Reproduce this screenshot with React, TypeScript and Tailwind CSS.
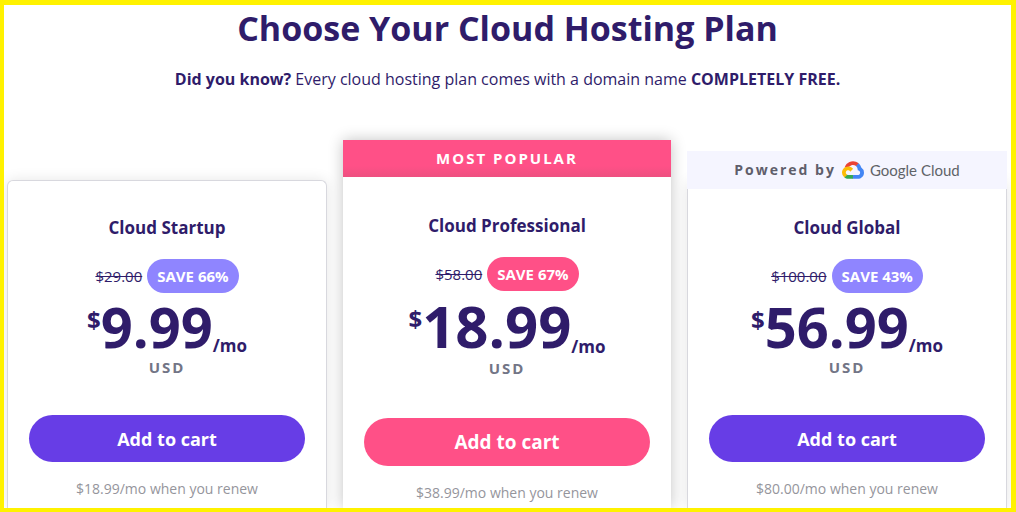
import React from 'react';
import clsx from 'clsx';

type Plan = {
  name: string;
  oldPrice: string;
  discount: string;
  price: string;
  renew: string;
  popular?: boolean;
  google?: boolean;
};

const plans: Plan[] = [
  {
    name: 'Cloud Startup',
    oldPrice: '$29.00',
    discount: 'SAVE 66%',
    price: '9.99',
    renew: '$18.99/mo when you renew',
  },
  {
    name: 'Cloud Professional',
    oldPrice: '$58.00',
    discount: 'SAVE 67%',
    price: '18.99',
    renew: '$38.99/mo when you renew',
    popular: true,
  },
  {
    name: 'Cloud Global',
    oldPrice: '$100.00',
    discount: 'SAVE 43%',
    price: '56.99',
    renew: '$80.00/mo when you renew',
    google: true,
  },
];

const GoogleCloudIcon = () => (
  <svg viewBox="0 0 256 206" className="h-[18px] w-[22px]" aria-hidden="true">
    <path
      fill="#EA4335"
      d="M170.25 56.82l22.25-22.25 1.48-9.37C153.44-11.67 88.98-7.49 52.42 33.93 42.27 45.44 34.73 59.8 30.72 74.58l7.96-1.12 44.51-7.34 3.44-3.51c19.8-21.75 53.27-24.67 76.13-6.17z"
    />
    <path
      fill="#4285F4"
      d="M224.2 73.92a100.25 100.25 0 0 0-30.22-48.72l-31.23 31.23a55.52 55.52 0 0 1 20.37 44.04v5.55c15.35 0 27.8 12.45 27.8 27.8 0 15.35-12.45 27.49-27.8 27.49h-55.67l-5.47 5.93v33.34l5.47 5.24h55.67c39.93.31 72.55-31.49 72.87-71.42a72.3 72.3 0 0 0-31.79-60.48"
    />
    <path
      fill="#34A853"
      d="M71.87 205.8h55.59v-44.51H71.87c-3.96 0-7.88-.85-11.48-2.49l-8.02 2.46-22.4 22.25-1.95 7.56c12.56 9.49 27.91 14.8 43.85 14.73"
    />
    <path
      fill="#FBBC05"
      d="M71.87 61.43C31.94 61.66-.24 94.23 0 134.16a72.3 72.3 0 0 0 28.02 56.94l32.24-32.25c-13.99-6.32-20.21-22.79-13.89-36.78 6.32-13.99 22.78-20.21 36.77-13.89a27.8 27.8 0 0 1 13.9 13.89l32.24-32.24a72.23 72.23 0 0 0-57.41-28.4"
    />
  </svg>
);

const Banner = ({ plan }: { plan: Plan }) => {
  if (plan.popular) {
    return (
      <div className="flex h-[37px] items-center justify-center bg-linear-to-b from-[#ff5087] from-70% to-[#ee5080] text-[15px] font-bold tracking-[2px] text-white">
        MOST POPULAR
      </div>
    );
  }
  if (plan.google) {
    return (
      <div className="relative z-10 -mb-1.5 flex h-[38px] items-center justify-center gap-1.5 bg-[#f5f5ff] text-[#5f5e6b]">
        <span className="text-sm font-bold tracking-[2px]">Powered by</span>
        <GoogleCloudIcon />
        <span className="font-['Lato',sans-serif] text-[15px] text-[#5f6368]">Google Cloud</span>
      </div>
    );
  }
  return null;
};

const PlanCard = ({ plan }: { plan: Plan }) => (
  <article
    className={clsx(
      'flex flex-col',
      plan.popular && 'z-20 shadow-[0_0_14px_rgba(0,0,0,0.24)]',
      plan.google && 'pt-[11px]',
      !plan.popular && !plan.google && 'pt-10'
    )}
  >
    <Banner plan={plan} />
    <div
      className={clsx(
        'flex grow flex-col items-center bg-white px-[21px]',
        plan.popular && 'pt-[37px]',
        plan.google && 'border-x border-[#d8d8de] pt-[33px] shadow-[0_0_14px_rgba(0,0,0,0.1)]',
        !plan.popular &&
          !plan.google &&
          'rounded-t-md border border-b-0 border-[#d8d8de] pt-[35px] shadow-[0_0_14px_rgba(0,0,0,0.1)]'
      )}
    >
      <h2 className="text-[17px] leading-6 font-bold">{plan.name}</h2>
      <div className="mt-[19px] flex items-center gap-[5px]">
        <s className="text-[15px]">{plan.oldPrice}</s>
        <span
          className={clsx(
            'rounded-full px-2.5 text-[15px] leading-[34px] font-bold text-white',
            plan.popular ? 'bg-[#ff5087]' : 'bg-[#8f85ff]'
          )}
        >
          {plan.discount}
        </span>
      </div>
      <p className={clsx('flex font-bold', plan.popular ? 'mt-1.5' : 'mt-[5px]')}>
        <span className="text-2xl leading-[44px]">$</span>
        <span className={plan.popular ? 'text-[58px] leading-[58px]' : 'text-[56px] leading-[56px]'}>
          {plan.price}
        </span>
        <span className="self-end text-[17px] leading-4">/mo</span>
      </p>
      <p className="mt-[5px] text-[15px] leading-4 font-bold tracking-[2px] text-[#727586]">USD</p>
      <button
        type="button"
        className={clsx(
          'w-full rounded-full font-bold text-white',
          plan.popular ? 'mt-[42px] h-12 bg-[#ff5087] text-[19px]' : 'mt-10 h-[47px] bg-[#673de6] text-lg'
        )}
      >
        Add to cart
      </button>
      <p className="mt-[15px] text-sm leading-6 text-[#95959c]">{plan.renew}</p>
    </div>
  </article>
);

const App = () => {
  return (
    <main className="flex min-h-screen flex-col overflow-hidden border-4 border-t-5 border-r-5 border-[#fff200] bg-white font-['Open_Sans',sans-serif] text-[#2f1c6a]">
      <header className="pt-px text-center">
        <h1 className="text-[34px] leading-[44px] font-bold">Choose Your Cloud Hosting Plan</h1>
        <p className="mt-[17px] text-base leading-6">
          <strong>Did you know?</strong> Every cloud hosting plan comes with a domain name{' '}
          <strong>COMPLETELY FREE.</strong>
        </p>
      </header>

      {/* Plans */}
      <section className="mt-[49px] grid grow grid-cols-[40fr_41fr_40fr] gap-4 pr-1 pl-[3px]">
        {plans.map((plan) => (
          <PlanCard key={plan.name} plan={plan} />
        ))}
      </section>
    </main>
  );
};

export default App;
